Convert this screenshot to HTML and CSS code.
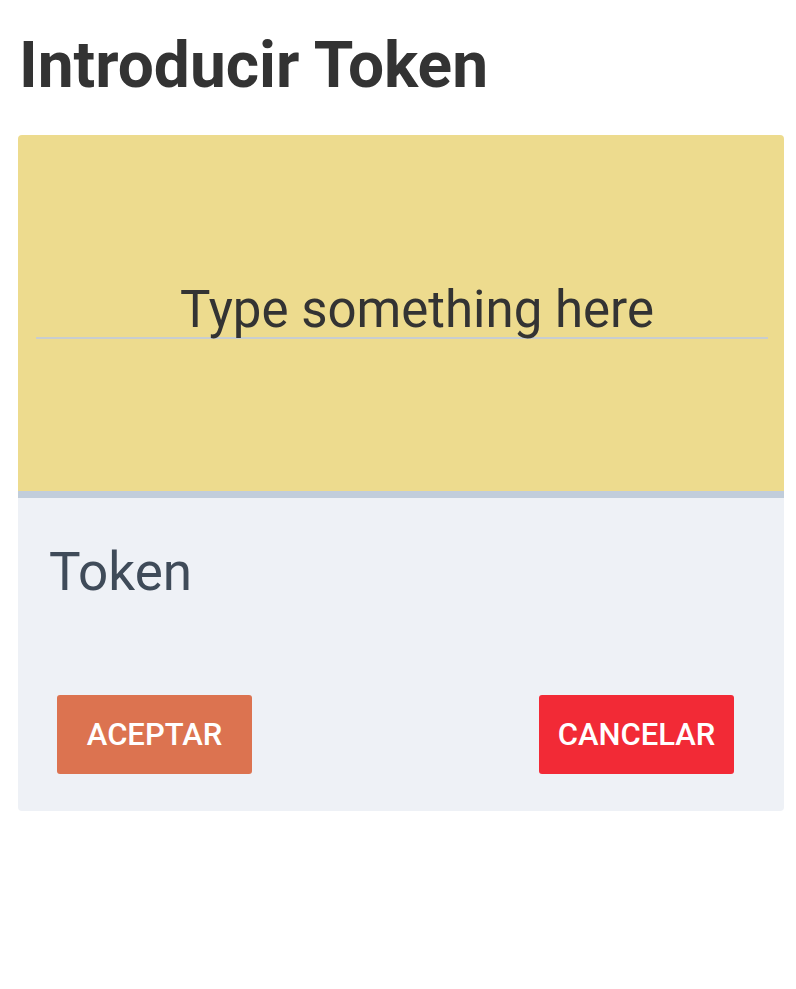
FILE: index.html
```html
<!DOCTYPE html>
<html>
<head>
<meta charset="utf-8">
<link rel="stylesheet" href="styles.css">
</head>
<body>
<h1 class="title">Introducir Token</h1>
<div class="card">
  <div class="input-area">
    <div class="input-line">Type something here</div>
  </div>
  <div class="bottom">
    <div class="label">Token</div>
    <div class="actions">
      <button class="btn btn-accept">ACEPTAR</button>
      <button class="btn btn-cancel">CANCELAR</button>
    </div>
  </div>
</div>
</body>
</html>
```
FILE: styles.css
```css
html, body {
  margin: 0;
  padding: 0;
  background: #ffffff;
  font-family: Roboto, "Liberation Sans", sans-serif;
}
body {
  padding: 28px 12px 0 18px;
}
.title {
  margin: 0 0 31px 1px;
  font-size: 64px;
  line-height: 76px;
  font-weight: 700;
  color: #333333;
}
.card {
  width: 766px;
  border-radius: 4px;
  overflow: hidden;
}
.input-area {
  height: 356px;
  background: #eddb8e;
  border-bottom: 7px solid #c1cddb;
  display: flex;
  align-items: center;
  padding: 0 16px 0 18px;
}
.input-line {
  flex: 1;
  text-align: center;
  font-size: 51px;
  line-height: 55px;
  color: #333333;
  border-bottom: 2px solid #c8cdcf;
  margin-bottom: 5px;
  padding-left: 30px;
}
.bottom {
  background: #eef1f6;
  height: 313px;
  display: flex;
  flex-direction: column;
}
.label {
  padding: 44px 0 0 31px;
  font-size: 53px;
  line-height: 60px;
  color: #3f4b59;
}
.actions {
  display: flex;
  justify-content: space-between;
  padding: 93px 50px 0 39px;
}
.btn {
  width: 195px;
  height: 79px;
  border: none;
  border-radius: 3px;
  color: #ffffff;
  font-family: Roboto, "Liberation Sans", sans-serif;
  font-weight: 500;
  font-size: 31px;
  padding: 0;
}
.btn-accept {
  background: #dc7350;
}
.btn-cancel {
  background: #f22a36;
}
```
